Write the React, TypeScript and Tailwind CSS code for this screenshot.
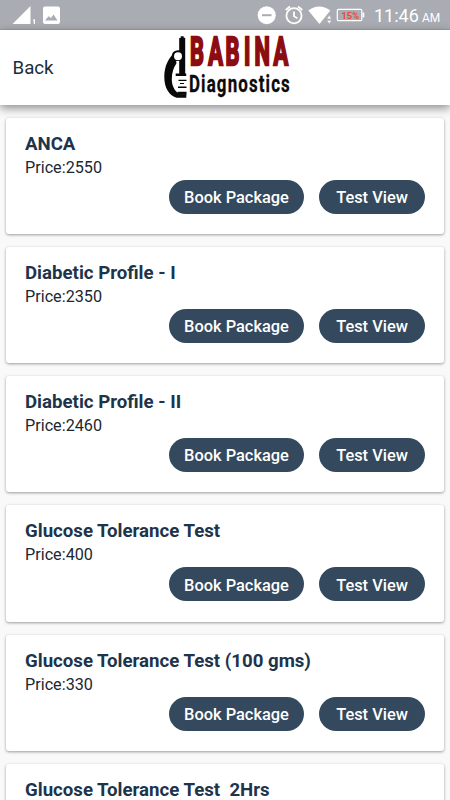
const packages = [
  { name: "ANCA", price: 2550 },
  { name: "Diabetic Profile - I", price: 2350 },
  { name: "Diabetic Profile - II", price: 2460 },
  { name: "Glucose Tolerance Test", price: 400 },
  { name: "Glucose Tolerance Test (100 gms)", price: 330 },
  { name: "Glucose Tolerance Test  2Hrs", price: 330 },
];

function StatusBar() {
  return (
    <div className="flex h-[30px] shrink-0 items-center border-b border-[#a29fa3] bg-[#a9acb2] text-white">
      {/* Signal and screenshot notification */}
      <svg className="ml-3 h-[30px] w-[50px]" viewBox="12 0 50 30" fill="currentColor">
        <path d="M12.500 24 30.500 6v18z" />
        <path d="M32.500 20.300 34 19.300h1V24h-1.300V20.800z" />
        <path
          fillRule="evenodd"
          d="M45 6.500h13q2 0 2 2v13.500q0 2-2 2H45q-2 0-2-2V8.500q0-2 2-2zM45 20.500h12.500L53.500 14.500l-2.500 3.500-2.500-1.800z"
        />
      </svg>

      {/* Do not disturb, alarm, wifi, battery */}
      <svg className="ml-auto h-[30px] w-[112px]" viewBox="255 0 112 30" fill="none">
        <circle cx="266.700" cy="15.200" r="9" fill="currentColor" />
        <path d="M262 15.200h9.500" stroke="#a9acb2" strokeWidth="2" />
        <g stroke="currentColor" strokeWidth="1.800">
          <circle cx="294" cy="15.800" r="7.600" />
          <path d="M294 11.500v4.800l3.400 2M285.700 10l4.300-3.500M302.300 10l-4.300-3.500" />
        </g>
        <path d="M308.300 10.500q10.800-8 22 0L319.500 24z" fill="currentColor" />
        <path d="M326.800 19 329.300 15 331.500 19zM326.800 20.300 329.300 24 331.500 20.300z" fill="currentColor" stroke="#a9acb2" strokeWidth=".6" />
        <rect x="337.300" y="9.300" width="24.500" height="11.400" rx="1.200" stroke="currentColor" strokeWidth="1.200" />
        <path d="M362.500 12.500h1.800v5h-1.800z" fill="currentColor" />
        <text x="341.500" y="18.500" textLength="17.500" lengthAdjust="spacingAndGlyphs" className="fill-[#e84a35] font-['Roboto',sans-serif] text-[9.500px] font-bold">
          15%
        </text>
      </svg>
      <div className="mr-[10px] ml-[7px] flex w-[66px] items-baseline justify-between whitespace-nowrap pt-[2px]">
        <span className="text-[18px] leading-none">11:46</span>
        <span className="text-[12px] leading-none tracking-[-0.2px]">AM</span>
      </div>
    </div>
  );
}

function Logo() {
  return (
    <svg className="h-[75px] w-[130px] overflow-visible" viewBox="162 30 130 75" role="img" aria-label="Babina Diagnostics">
      {/* Microscope */}
      <g fill="#080808">
        <path d="M180.700 36.300h3v1.500h1.500V73.500h1v2.500h-10.500V73.500h3.500V38h1.500z" />
        <path d="M174.500 53C168 58 164.300 67 164.300 77c0 11.500 5 18.500 12.500 20.800h9.500v-3.500h-6.500c-5.300-3-8-8.500-8-15 0-6.500 1.700-11.500 4.700-16z" />
        <path d="M171.800 56.500a6 6 0 0 1 11.500-2.500v7h-8z" />
        <path d="M178.500 79.800h8v1.300h-8zM180 83h4v1h-4zM178 86.500h8.500v1.400H178zM177.500 91.800h9v3h-9z" />
      </g>
      <circle cx="178" cy="56.300" r="4" fill="white" />
      <text
        x="339.500 372 402.500 435.500 454.500 488.500"
        y="65.500"
        transform="scale(.56 1)"
        className="fill-[#8b0d12] stroke-[#8b0d12] stroke-[2.400px] font-['Roboto',sans-serif] text-[39px] font-bold"
      >
        BABINA
      </text>
      <text
        x="262.500"
        y="92.500"
        transform="scale(.72 1)"
        textLength="140"
        className="fill-[#0b0b0b] stroke-[#0b0b0b] stroke-[.3px] font-['Roboto',sans-serif] text-[23.500px] font-bold"
      >
        Diagnostics
      </text>
    </svg>
  );
}

function PackageCard({ name, price }: { name: string; price: number }) {
  return (
    <div className="h-[116.200px] shrink-0 rounded-[3px] bg-white px-[19px] pt-[15px] shadow-[0_1px_3px_rgba(0,0,0,0.38)]">
      <h2 className="whitespace-pre text-[18.650px] leading-[22px] font-bold text-[#1d344b]">{name}</h2>
      <p className="mt-[3px] text-[16.200px] leading-[20px] text-[#1c2730]">Price:{price}</p>
      <div className="mt-[2px] flex justify-end gap-[15px]">
        <button className="h-[34px] w-[135px] rounded-full bg-[#34495e] pt-[3px] text-[16.400px] font-medium text-white">
          Book Package
        </button>
        <button className="h-[34px] w-[106px] rounded-full bg-[#34495e] pt-[3px] text-[16.400px] font-medium text-white">
          Test View
        </button>
      </div>
    </div>
  );
}

export default function App() {
  return (
    <div className="flex h-[800px] w-[450px] flex-col overflow-hidden bg-[#f9f9f9] font-['Roboto',sans-serif]">
      <StatusBar />

      {/* Header */}
      <header className="relative flex h-[75px] shrink-0 items-center bg-white shadow-[0_3px_9px_rgba(0,0,0,0.45)]">
        <button className="ml-[12.500px] w-[149.500px] pt-[2px] text-left text-[18.700px] text-[#1c2d3a]">Back</button>
        <Logo />
      </header>

      {/* Packages */}
      <main className="flex flex-1 flex-col gap-[13px] overflow-hidden px-[6px] pt-[12.800px]">
        {packages.map((item) => (
          <PackageCard key={item.name} name={item.name} price={item.price} />
        ))}
      </main>
    </div>
  );
}
